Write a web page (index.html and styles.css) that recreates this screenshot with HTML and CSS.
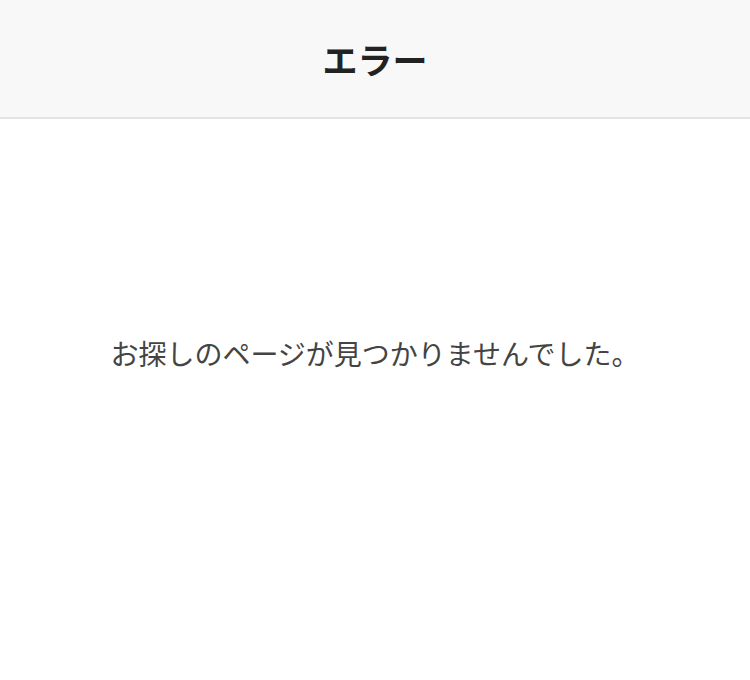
FILE: index.html
```html
<!DOCTYPE html>
<html lang="ja">
<head>
    <meta charset="UTF-8">
    <meta name="viewport" content="width=device-width, initial-scale=1.0">
    <title>エラー</title>
    <link rel="stylesheet" href="styles.css">
</head>
<body>
    <header class="page-header">
        <h1>エラー</h1>
    </header>
    <main class="error-body">
        <p>お探しのページが見つかりませんでした。</p>
    </main>
</body>
</html>
```

FILE: styles.css
```css
body {
    margin: 0;
    font-family: "Noto Sans CJK JP", "Noto Sans", sans-serif;
    background: #fff;
    color: #333;
}
.page-header {
    height: 117px;
    background-color: #f8f8f8;
    border-bottom: 2px solid #e4e4e4;
    display: flex;
    align-items: center;
    justify-content: center;
}
.page-header h1 {
    margin: 0;
    font-size: 35px;
    font-weight: bold;
    color: #222;
}
.error-body {
    padding-top: 214px;
    text-align: center;
}
.error-body p {
    margin: 0;
    font-size: 28px;
    line-height: 40px;
    color: #444;
}
```
